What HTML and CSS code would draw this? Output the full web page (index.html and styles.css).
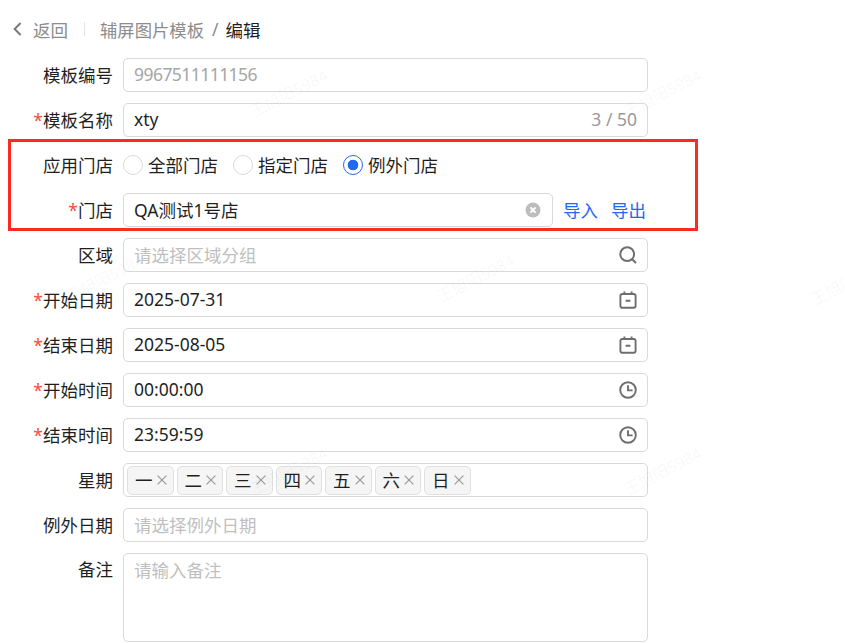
FILE: index.html
```html
<!DOCTYPE html>
<html lang="zh-CN">
<head>
  <meta charset="UTF-8">
  <title>辅屏图片模板 编辑</title>
  <link rel="stylesheet" href="styles.css">
</head>
<body>

  <div class="page">
    <div class="page-header">
      <svg class="back-icon" width="10" height="14" viewBox="0 0 10 14"><path d="M8.6 1 2.6 7 8.6 13" fill="none" stroke="#777" stroke-width="1.9"/></svg>
      <span class="back-text">返回</span>
      <span class="divider"></span>
      <span class="crumb">辅屏图片模板</span>
      <span class="crumb-sep">/</span>
      <span class="crumb-current">编辑</span>
    </div>

    <form class="form">
      <div class="form-row">
        <label class="form-label">模板编号</label>
        <div class="input is-disabled"><span class="code">9967511111156</span></div>
      </div>

      <div class="form-row">
        <label class="form-label"><i>*</i>模板名称</label>
        <div class="input">xty<span class="count">3 / 50</span></div>
      </div>

      <div class="form-row">
        <label class="form-label">应用门店</label>
        <div class="radio-group">
          <span class="radio"><span class="radio-dot"></span>全部门店</span>
          <span class="radio"><span class="radio-dot"></span>指定门店</span>
          <span class="radio is-checked"><span class="radio-dot"></span>例外门店</span>
        </div>
      </div>

      <div class="form-row">
        <label class="form-label"><i>*</i>门店</label>
        <div class="input store-input">QA测试1号店
          <svg class="suffix" width="16" height="16" viewBox="0 0 16 16"><circle cx="8" cy="8" r="7.5" fill="#bdbdbd"/><path d="M5.4 5.4l5.2 5.2M10.6 5.4l-5.2 5.2" stroke="#fff" stroke-width="2"/></svg>
        </div>
        <a class="link">导入</a>
        <a class="link">导出</a>
      </div>

      <div class="form-row">
        <label class="form-label">区域</label>
        <div class="input is-placeholder">请选择区域分组
          <svg class="suffix" width="18" height="18" viewBox="0 0 18 18"><circle cx="8.2" cy="8.2" r="6.9" fill="none" stroke="#6e6e6e" stroke-width="2"/><path d="M13.2 13.2 17 17" stroke="#6e6e6e" stroke-width="2"/></svg>
        </div>
      </div>

      <div class="form-row">
        <label class="form-label"><i>*</i>开始日期</label>
        <div class="input">2025-07-31
          <svg class="suffix" width="18" height="18" viewBox="0 0 18 18"><use href="#calendar"/></svg>
        </div>
      </div>

      <div class="form-row">
        <label class="form-label"><i>*</i>结束日期</label>
        <div class="input">2025-08-05
          <svg class="suffix" width="18" height="18" viewBox="0 0 18 18"><use href="#calendar"/></svg>
        </div>
      </div>

      <div class="form-row">
        <label class="form-label"><i>*</i>开始时间</label>
        <div class="input">00:00:00
          <svg class="suffix" width="18" height="18" viewBox="0 0 18 18"><use href="#clock"/></svg>
        </div>
      </div>

      <div class="form-row">
        <label class="form-label"><i>*</i>结束时间</label>
        <div class="input">23:59:59
          <svg class="suffix" width="18" height="18" viewBox="0 0 18 18"><use href="#clock"/></svg>
        </div>
      </div>

      <div class="form-row">
        <label class="form-label">星期</label>
        <div class="input tag-input">
          <span class="tag">一<svg width="10" height="10" viewBox="0 0 10 10"><use href="#close"/></svg></span>
          <span class="tag">二<svg width="10" height="10" viewBox="0 0 10 10"><use href="#close"/></svg></span>
          <span class="tag">三<svg width="10" height="10" viewBox="0 0 10 10"><use href="#close"/></svg></span>
          <span class="tag">四<svg width="10" height="10" viewBox="0 0 10 10"><use href="#close"/></svg></span>
          <span class="tag">五<svg width="10" height="10" viewBox="0 0 10 10"><use href="#close"/></svg></span>
          <span class="tag">六<svg width="10" height="10" viewBox="0 0 10 10"><use href="#close"/></svg></span>
          <span class="tag">日<svg width="10" height="10" viewBox="0 0 10 10"><use href="#close"/></svg></span>
        </div>
      </div>

      <div class="form-row">
        <label class="form-label">例外日期</label>
        <div class="input is-placeholder">请选择例外日期</div>
      </div>

      <div class="form-row">
        <label class="form-label label-top">备注</label>
        <div class="input textarea is-placeholder">请输入备注</div>
      </div>
    </form>
  </div>

  <div class="highlight"></div>

  <div class="marks">
    <span class="mark m1">王旭阳5984</span>
    <span class="mark m2">王旭阳5984</span>
    <span class="mark m3">王旭阳5984</span>
    <span class="mark m4">王旭阳5984</span>
    <span class="mark m5">王旭阳5984</span>
    <span class="mark m6">王旭阳5984</span>
    <span class="mark m7">王旭阳5984</span>
  </div>

  <svg width="0" height="0" class="defs">
    <symbol id="calendar" viewBox="0 0 18 18">
      <rect x="1.4" y="3" width="15.2" height="13.8" rx="2" fill="none" stroke="#6e6e6e" stroke-width="1.9"/>
      <path d="M5.4 .4v3.6M12.6 .4v3.6M6.6 9.8h4.8" fill="none" stroke="#6e6e6e" stroke-width="1.9"/>
    </symbol>
    <symbol id="clock" viewBox="0 0 18 18">
      <circle cx="9" cy="9" r="7.8" fill="none" stroke="#6e6e6e" stroke-width="1.9"/>
      <path d="M9 4.2V9.4H13.6" fill="none" stroke="#6e6e6e" stroke-width="1.9"/>
    </symbol>
    <symbol id="close" viewBox="0 0 10 10">
      <path d="M.6 .6l8.8 8.8M9.4 .6l-8.8 8.8" fill="none" stroke="#999" stroke-width="1.2"/>
    </symbol>
  </svg>

</body>
</html>
```

FILE: styles.css
```css
* {
  box-sizing: border-box;
}

html, body {
  height: 100%;
  overflow: hidden;
}

body {
  margin: 0;
  background: #fff;
  color: #1f1f1f;
  font-family: "Noto Sans", "Noto Sans CJK SC", sans-serif;
  font-size: 17.5px;
}

.page {
  padding-top: 13px;
}

.page-header {
  display: flex;
  align-items: center;
  height: 34px;
  margin-bottom: 11px;
  padding-left: 12px;
  padding-bottom: 2px;
}

.back-icon {
  margin-right: 11px;
}

.back-text,
.crumb,
.crumb-sep {
  color: #8c8c8c;
}

.crumb {
  font-size: 17.33px;
}

.divider {
  width: 1px;
  height: 14px;
  margin: 0 15px 0 16px;
  background: #e4e4e4;
}

.crumb-sep {
  margin: 0 7px 0 8px;
}

.form-row {
  display: flex;
  align-items: center;
  margin-bottom: 11px;
}

.form-label {
  flex: none;
  width: 113px;
  margin-right: 10px;
  padding-bottom: 2px;
  text-align: right;
  white-space: nowrap;
}

.form-label i {
  color: #f5503c;
  font-style: normal;
}

.label-top {
  align-self: flex-start;
  line-height: 32px;
}

.input {
  position: relative;
  display: flex;
  align-items: center;
  width: 525px;
  height: 34px;
  padding: 0 10px 2px;
  border: 1px solid #d9d9d9;
  border-radius: 5px;
  white-space: nowrap;
}

.is-disabled {
  color: #a6a6a6;
}

.code {
  letter-spacing: -0.55px;
}

.is-placeholder {
  color: #bfbfbf;
}

.count {
  margin-left: auto;
  padding-left: 1px;
  color: #999;
}

.suffix {
  position: absolute;
  right: 10px;
  top: 7px;
}

.radio-group {
  display: flex;
  align-items: center;
  gap: 15px;
  height: 34px;
  padding-bottom: 1px;
}

.radio {
  display: flex;
  align-items: center;
  gap: 5px;
  width: 95px;
}

.radio-dot {
  width: 20px;
  height: 20px;
  border: 1px solid #d9d9d9;
  border-radius: 50%;
}

.is-checked .radio-dot {
  border-color: #2468f2;
  background: radial-gradient(circle, #2468f2 0 5px, #fff 5.6px);
}

.store-input {
  width: 430px;
  margin-right: 10px;
}

.store-input .suffix {
  top: 8px;
  right: 11px;
}

.link {
  margin-right: 13px;
  padding-bottom: 2px;
  color: #2468f2;
}

.tag-input {
  gap: 3px;
  padding: 0 3px;
}

.tag {
  display: flex;
  align-items: center;
  width: 46.5px;
  height: 29px;
  padding-left: 7px;
  padding-bottom: 2px;
  border: 1px solid #e0e0e0;
  border-radius: 5px;
  background: #f5f5f5;
  color: #1f1f1f;
}

.tag svg {
  margin-left: 4px;
  margin-top: 1px;
}

.textarea {
  align-items: flex-start;
  height: 89px;
  padding-top: 0;
  line-height: 32px;
}

.highlight {
  position: absolute;
  left: 8px;
  top: 139px;
  width: 690px;
  height: 92px;
  border: 3px solid #ff2a1f;
}

.marks {
  position: absolute;
  top: 0;
  left: 0;
  width: 100%;
  height: 100%;
  overflow: hidden;
  pointer-events: none;
}

.mark {
  position: absolute;
  width: 90px;
  color: rgba(0, 0, 0, 0.04);
  font-size: 16px;
  line-height: 22px;
  white-space: nowrap;
  transform: rotate(-27deg);
}

.m1 { left: 246px; top: 81px; }
.m2 { left: 620px; top: 81px; }
.m3 { left: 62px; top: 266px; }
.m4 { left: 433px; top: 266px; }
.m5 { left: 807px; top: 269px; }
.m6 { left: 620px; top: 459px; }
.m7 { left: 246px; top: 459px; }

.defs {
  position: absolute;
}
```
